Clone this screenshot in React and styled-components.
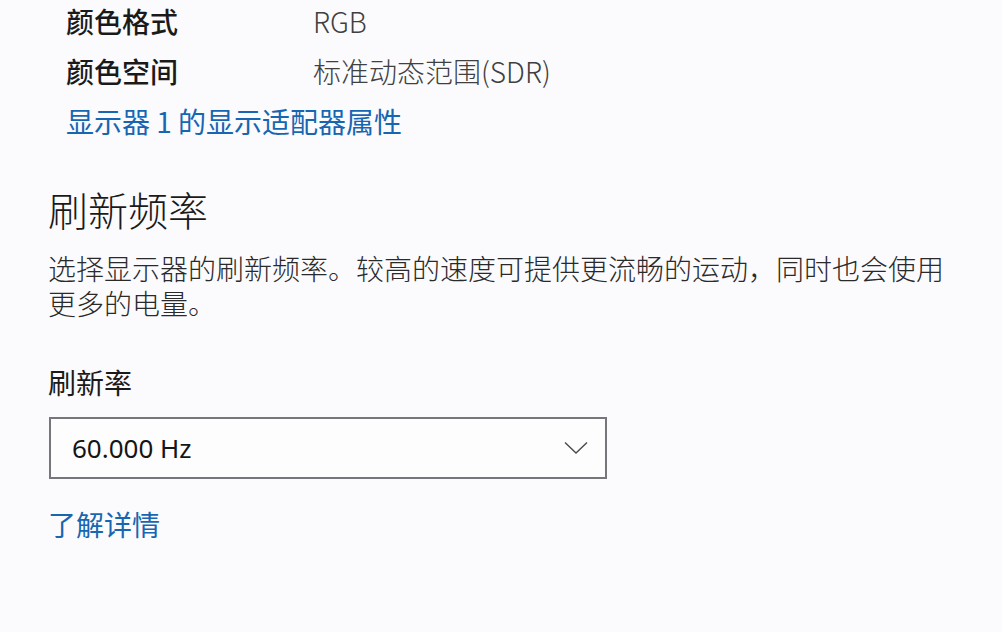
import React from "react";
import styled, { createGlobalStyle } from "styled-components";

const Global = createGlobalStyle`
  html, body { margin: 0; padding: 0; background: #fbfbfd; }
  body {
    font-family: "Noto Sans", "Noto Sans CJK SC", sans-serif;
    color: #1b1b1b;
    -webkit-font-smoothing: antialiased;
  }
`;

const Page = styled.div`
  width: 1002px;
  height: 632px;
  overflow: hidden;
  background: #fbfbfd;
  padding-left: 48px;
  box-sizing: border-box;
  display: flex;
  flex-direction: column;
  align-items: flex-start;
`;

const InfoList = styled.div`
  display: grid;
  grid-template-columns: 247px auto;
  row-gap: 8px;
  padding-left: 18px;
`;

const Label = styled.div`
  font-family: "Noto Sans CJK SC", sans-serif;
  font-size: 28px;
  font-weight: 500;
  line-height: 42px;
  color: #1a1a1a;
`;

const Value = styled.div`
  font-family: "Noto Sans CJK SC", sans-serif;
  font-size: 28px;
  line-height: 42px;
  color: #404040;
  font-weight: 300;
`;

const Link = styled.a`
  font-family: "Noto Sans CJK SC", sans-serif;
  font-size: 28px;
  line-height: ${(p) => p.$lh || 42}px;
  color: #1766b2;
  text-decoration: none;
  cursor: pointer;
  grid-column: 1 / span 2;
  margin-top: ${(p) => p.$mt || 0}px;
`;

const Heading = styled.h2`
  margin: 39px 0 0;
  font-family: "Noto Sans CJK SC", sans-serif;
  font-weight: 300;
  font-size: 40px;
  line-height: 56px;
  color: #1a1a1a;
`;

const Description = styled.p`
  margin: 14px 0 0;
  max-width: 910px;
  font-family: "Noto Sans CJK SC", sans-serif;
  font-weight: 300;
  font-size: 28px;
  line-height: 35px;
  color: #2a2a2a;
`;

const FieldLabel = styled.div`
  margin-top: 41px;
  font-family: "Noto Sans CJK SC", sans-serif;
  font-size: 28px;
  line-height: 40px;
  color: #1a1a1a;
`;

const Select = styled.div`
  margin-top: 15px;
  margin-left: 1px;
  width: 558px;
  height: 62px;
  box-sizing: border-box;
  border: 2px solid #77767b;
  background: #fdfdfe;
  display: flex;
  align-items: center;
  justify-content: space-between;
  padding: 0 17px 0 21px;
`;

const SelectText = styled.span`
  font-family: "Noto Sans", sans-serif;
  font-size: 26px;
  color: #151515;
`;

const Chevron = () => (
  <svg width="24" height="14" viewBox="0 0 24 14">
    <polyline
      points="1,1.5 12,12 23,1.5"
      fill="none"
      stroke="#4a4a4a"
      strokeWidth="1.4"
    />
  </svg>
);

export default function App() {
  return (
    <>
      <Global />
      <Page>
        <InfoList>
          <Label>颜色格式</Label>
          <Value>RGB</Value>
          <Label>颜色空间</Label>
          <Value>标准动态范围(SDR)</Value>
          <Link>显示器 1 的显示适配器属性</Link>
        </InfoList>
        <Heading>刷新频率</Heading>
        <Description>
          选择显示器的刷新频率。较高的速度可提供更流畅的运动，同时也会使用更多的电量。
        </Description>
        <FieldLabel>刷新率</FieldLabel>
        <Select>
          <SelectText>60.000 Hz</SelectText>
          <Chevron />
        </Select>
        <Link $mt={25} $lh={40}>了解详情</Link>
      </Page>
    </>
  );
}
